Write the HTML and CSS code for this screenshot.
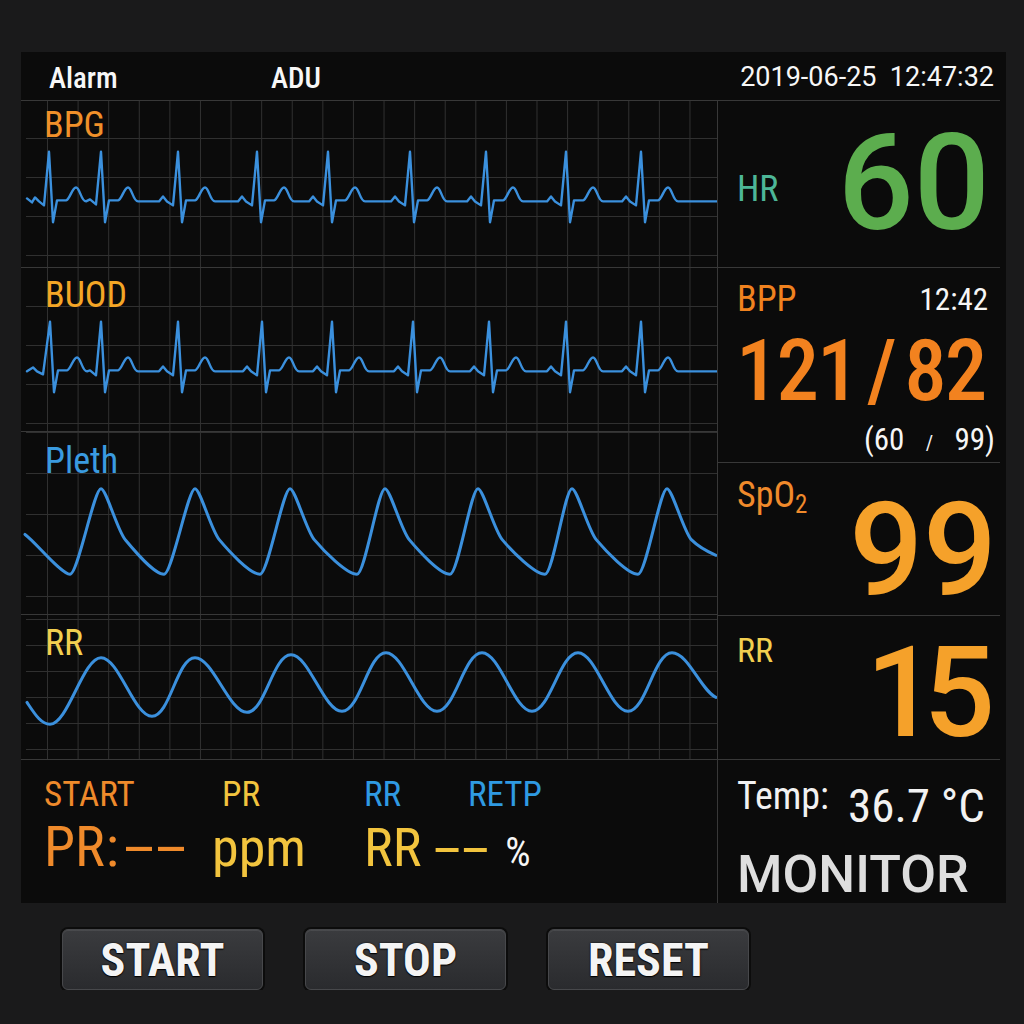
FILE: index.html
```html
<!DOCTYPE html>
<html lang="en">
<head>
<meta charset="utf-8">
<title>Patient Monitor</title>
<link rel="stylesheet" href="styles.css">
</head>
<body>
<main class="screen">
  <header class="topbar">
    <span class="tb-alarm">Alarm</span>
    <span class="tb-adu">ADU</span>
    <span class="tb-date">2019-06-25&nbsp;&nbsp;12:47:32</span>
  </header>
  <div class="main">
    <div class="waves">
      <section class="wave ecg1">
        <div class="wave-label lbl-bpg">BPG</div>
        <svg class="trace" viewBox="0 0 696 167" preserveAspectRatio="none" aria-hidden="true">
          <path class="ecg" d="M6,98 L11,102 L14,97 L18,101 L23,105 L28,51 L32,122 L36,100 L45,100 C49,99 51,87 55,87 C59,87 60,101 65,101 L69,99 L75,104 L80,51 L84,122 L88,100 L97,100 C101,99 103,87 107,87 C111,87 112,101 117,101 L138,101 L142,96 L146,101 L152,105 L157,51 L161,122 L165,100 L174,100 C178,99 180,87 184,87 C188,87 189,101 194,101 L217,101 L221,96 L225,101 L231,105 L236,51 L240,122 L244,100 L253,100 C257,99 259,87 263,87 C267,87 268,101 273,101 L288,101 L292,96 L296,101 L302,105 L307,51 L311,122 L315,100 L324,100 C328,99 330,87 334,87 C338,87 339,101 344,101 L370,101 L374,96 L378,101 L384,105 L389,51 L393,122 L397,100 L406,100 C410,99 412,87 416,87 C420,87 421,101 426,101 L446,101 L450,96 L454,101 L460,105 L465,51 L469,122 L473,100 L482,100 C486,99 488,87 492,87 C496,87 497,101 502,101 L526,101 L530,96 L534,101 L540,105 L545,51 L549,122 L553,100 L562,100 C566,99 568,87 572,87 C576,87 577,101 582,101 L601,101 L605,96 L609,101 L615,105 L620,51 L624,122 L628,100 L637,100 C641,99 643,87 647,87 C651,87 652,101 657,101 L696,101"/>
        </svg>
      </section>
      <section class="wave ecg2">
        <div class="wave-label lbl-buod">BUOD</div>
        <svg class="trace" viewBox="0 0 696 164" preserveAspectRatio="none" aria-hidden="true">
          <path class="ecg" transform="translate(0 3)" d="M6,101 L12,97 L16,101 L22,104 L29,51 L33,122 L37,100 L46,100 C50,99 52,87 56,87 C60,87 61,101 66,101 L69,100 L75,105 L80,51 L84,122 L88,100 L97,100 C101,99 103,87 107,87 C111,87 112,101 117,101 L138,101 L142,96 L146,101 L152,105 L157,51 L161,122 L165,100 L174,100 C178,99 180,87 184,87 C188,87 189,101 194,101 L222,101 L226,96 L230,101 L236,105 L241,51 L245,122 L249,100 L258,100 C262,99 264,87 268,87 C272,87 273,101 278,101 L292,101 L296,96 L300,101 L306,105 L311,51 L315,122 L319,100 L328,100 C332,99 334,87 338,87 C342,87 343,101 348,101 L373,101 L377,96 L381,101 L387,105 L392,51 L396,122 L400,100 L409,100 C413,99 415,87 419,87 C423,87 424,101 429,101 L449,101 L453,96 L457,101 L463,105 L468,51 L472,122 L476,100 L485,100 C489,99 491,87 495,87 C499,87 500,101 505,101 L526,101 L530,96 L534,101 L540,105 L545,51 L549,122 L553,100 L562,100 C566,99 568,87 572,87 C576,87 577,101 582,101 L601,101 L605,96 L609,101 L615,105 L620,51 L624,122 L628,100 L637,100 C641,99 643,87 647,87 C651,87 652,101 657,101 L696,101"/>
        </svg>
      </section>
      <section class="wave pleth">
        <div class="wave-label lbl-pleth">Pleth</div>
        <svg class="trace" viewBox="0 0 696 183" preserveAspectRatio="none" aria-hidden="true">
          <path class="smooth" d="M4,103 C14,110 40,143 49,143 C57,143 73,57 80,57 C85,57 96,98 104,108 C114,120 133,143 143,143 C151,143 167,57 174,57 C179,57 190,98 198,108 C208,120 229,143 239,143 C247,143 262,57 269,57 C274,57 285,98 293,108 C303,120 326,143 336,143 C344,143 357,57 364,57 C369,57 380,98 388,108 C398,120 419,143 429,143 C437,143 450,57 457,57 C462,57 473,98 481,108 C491,120 514,143 524,143 C532,143 544,57 551,57 C556,57 567,98 575,108 C585,120 607,143 617,143 C625,143 639,57 646,57 C651,57 662,98 670,108 C678,116 688,121 695,124"/>
        </svg>
      </section>
      <section class="wave resp">
        <div class="wave-label lbl-rr">RR</div>
        <svg class="trace" viewBox="0 0 696 145" preserveAspectRatio="none" aria-hidden="true">
          <path class="smooth" d="M6,88 C14,100 20,110 29,110 C47,110 62,43 80,43 C98,43 113,102 131,102 C149,102 156,43 174,43 C192,43 208,98 226,98 C244,98 252,40 270,40 C288,40 303,97 321,97 C339,97 347,38 365,38 C383,38 398,97 416,97 C434,97 443,38 461,38 C479,38 493,97 511,97 C529,97 539,38 557,38 C575,38 589,97 607,97 C625,97 633,38 651,38 C667,38 680,76 695,83"/>
        </svg>
      </section>
      <section class="params">
        <div class="params-labels">
          <span class="c-orange">START</span>
          <span class="c-yellow">PR</span>
          <span class="c-blue">RR</span>
          <span class="c-blue">RETP</span>
        </div>
        <div class="params-values">
          <span class="pv pv-pr c-orange">PR<span class="colon">:</span><span class="dash">--</span></span>
          <span class="pv pv-ppm c-yellow">ppm</span>
          <span class="pv pv-rr"><span class="c-yellow">RR</span><span class="dash dash-rr c-yellow">--</span><span class="pct">%</span></span>
        </div>
      </section>
    </div>
    <div class="panels">
      <section class="panel hr">
        <span class="hr-label">HR</span>
        <span class="hr-value">60</span>
      </section>
      <section class="panel bpp">
        <div class="bpp-head">
          <span class="bpp-label">BPP</span>
          <span class="bpp-time">12:42</span>
        </div>
        <div class="bpp-value">121 / 82</div>
        <div class="bpp-range">(60&nbsp;&nbsp; <span class="thin-slash">/</span> &nbsp;&nbsp;99)</div>
      </section>
      <section class="panel spo2">
        <span class="spo2-label">SpO<sub>2</sub></span>
        <span class="spo2-value">99</span>
      </section>
      <section class="panel rrp">
        <span class="rrp-label">RR</span>
        <span class="rrp-value">15</span>
      </section>
      <section class="panel temp">
        <div class="temp-row">
          <span class="temp-label">Temp:</span>
          <span class="temp-value">36.7 °C</span>
        </div>
        <div class="monitor">MONITOR</div>
      </section>
    </div>
  </div>
</main>
<div class="buttons">
  <button class="btn" type="button">START</button>
  <button class="btn" type="button">STOP</button>
  <button class="btn" type="button">RESET</button>
</div>
</body>
</html>
```

FILE: styles.css
```css
* { box-sizing: border-box; }

body {
  margin: 0;
  background: #1a1a1b;
  color: #f4f4f4;
  font-family: "Roboto Condensed", "Liberation Sans Narrow", Roboto, "DejaVu Sans", sans-serif;
  font-stretch: condensed;
}

.screen {
  display: flex;
  flex-direction: column;
  width: 985px;
  height: 851px;
  margin: 52px 0 0 21px;
  background: #0b0b0b;
}

/* ---------- top bar ---------- */
.topbar {
  display: flex;
  align-items: flex-start;
  height: 49px;
  margin-right: 6px;
  padding: 12px 6px 0 28px;
  border-bottom: 1px solid #383838;
  font-size: 29px;
  line-height: 1;
  font-weight: 500;
  color: #f7f7f7;
}
.tb-alarm { width: 222px; }
.tb-date {
  margin: 0 0 0 auto;
  font-family: Roboto, "DejaVu Sans", sans-serif;
  font-stretch: normal;
  font-size: 27px;
  font-weight: 400;
}

.main { display: flex; flex: 1; min-height: 0; }

/* ---------- waveform column ---------- */
.waves {
  display: flex;
  flex-direction: column;
  width: 697px;
  border-right: 1px solid #383838;
}

.wave {
  position: relative;
  border-bottom: 1px solid #383838;
  background-image:
    linear-gradient(to right, #303030 1px, transparent 1px),
    linear-gradient(to bottom, #303030 1px, transparent 1px);
  background-repeat: repeat-x, repeat-y;
  background-size: 30.6px 100%, calc(100% - 5px) var(--hs);
  background-position: 26px 0, 5px var(--ho);
}
.ecg1  { height: 167px; --hs: 39px; --ho: 37px; }
.ecg2  { height: 164px; --hs: 39px; --ho: 38px; }
.pleth { height: 183px; --hs: 41px; --ho: 41px; }
.resp  { height: 145px; --hs: 26px; --ho: 30px; }

.trace {
  position: absolute;
  inset: 0;
  width: 100%;
  height: 100%;
}
.trace path {
  fill: none;
  stroke: #3b90dd;
  stroke-linejoin: round;
  stroke-linecap: round;
}
.trace .ecg { stroke-width: 2.4; }
.trace .smooth { stroke-width: 3; }

.wave-label {
  position: relative;
  z-index: 1;
  padding: 6px 0 0 23px;
  font-size: 36px;
  line-height: 1;
}
.lbl-bpg   { color: #f0902a; }
.lbl-buod  { color: #f4a626; padding-top: 9px; padding-left: 24px; }
.lbl-pleth { color: #3a9be0; padding-top: 11px; padding-left: 24px; }
.lbl-rr    { color: #f2cf50; padding-top: 10px; padding-left: 24px; }

/* ---------- bottom parameter strip ---------- */
.params {
  height: 143px;
  padding: 17px 0 0 23px;
}
.params-labels {
  display: grid;
  grid-template-columns: 178px 142px 104px auto;
  font-size: 35px;
  line-height: 1;
}
.params-values {
  display: grid;
  grid-template-columns: 168px 152px auto;
  align-items: baseline;
  margin-top: 7px;
  line-height: 1;
}
.pv-pr  { font-size: 56px; }
.pv-ppm { font-size: 54px; }
.pv-rr  { font-size: 54px; }
.colon { margin-left: 1px; }
.dash {
  display: inline-block;
  margin-left: 4px;
  transform: scaleX(2.3);
  transform-origin: left center;
}
.dash-rr { margin: 0 45px 0 12px; transform: scaleX(2.1); }
.pct { font-size: 40px; color: #f6f6f6; }

.c-orange { color: #ef8a2b; }
.c-yellow { color: #f2c43e; }
.c-blue   { color: #2f9ae2; }

/* ---------- numeric panels ---------- */
.panels {
  display: flex;
  flex-direction: column;
  flex: 1;
  padding-right: 6px;
}
.panel { border-bottom: 1px solid #383838; }

.hr {
  display: flex;
  align-items: center;
  justify-content: space-between;
  height: 167px;
  padding: 0 10px 0 19px;
}
.hr-label { margin-top: 9px; font-size: 36px; line-height: 1; color: #4db697; }
.hr-value {
  font-family: Roboto, "DejaVu Sans", sans-serif;
  font-stretch: normal;
  font-weight: 500;
  font-size: 134px;
  line-height: 1;
  color: #5cad4e;
}

.bpp {
  display: flex;
  flex-direction: column;
  height: 195px;
  padding: 13px 0 0 19px;
}
.bpp-head {
  display: flex;
  justify-content: space-between;
  align-items: flex-start;
  padding-right: 12px;
}
.bpp-label { font-size: 36px; line-height: 1; color: #f0821f; }
.bpp-time { margin-top: 3px; font-size: 31px; line-height: 1; color: #f6f6f6; }
.bpp-value {
  margin: 20px 0 0 -1px;
  font-size: 85px;
  font-weight: 500;
  line-height: 0.8;
  letter-spacing: -2px;
  word-spacing: -8px;
  white-space: nowrap;
  color: #f2821f;
}
.bpp-range {
  align-self: flex-end;
  margin: 19px 5px 0 0;
  font-size: 31px;
  line-height: 1;
  color: #f6f6f6;
  white-space: nowrap;
}
.thin-slash { font-size: 20px; }

.spo2 {
  display: flex;
  justify-content: space-between;
  height: 153px;
  padding: 0 3px 0 19px;
}
.spo2-label {
  align-self: flex-start;
  margin-top: 14px;
  font-size: 36px;
  line-height: 1;
  color: #f08a2b;
}
.spo2-label sub {
  font-size: 25px;
  line-height: 0;
  vertical-align: -6px;
}
.spo2-value, .rrp-value {
  align-self: flex-end;
  font-family: Roboto, "DejaVu Sans", sans-serif;
  font-stretch: normal;
  font-weight: 500;
  line-height: 1;
  color: #f5a12a;
}
.spo2-value { font-size: 130px; }

.rrp {
  display: flex;
  justify-content: space-between;
  height: 144px;
  padding: 0 19px 0 19px;
}
.rrp-label {
  align-self: flex-start;
  margin-top: 17px;
  font-size: 34px;
  line-height: 1;
  color: #f2cf50;
}
.rrp-value { font-size: 126px; margin-bottom: 3px; letter-spacing: -14px; }

.temp {
  height: 143px;
  padding: 17px 0 0 19px;
  border-bottom: none;
}
.temp-row { display: flex; align-items: flex-start; }
.temp-label { font-size: 38px; line-height: 1; color: #f2f2f2; }
.temp-value { margin: 5px 0 0 19px; font-size: 47px; line-height: 1; color: #f2f2f2; }
.monitor {
  margin-top: 20px;
  font-family: Roboto, "DejaVu Sans", sans-serif;
  font-stretch: normal;
  font-weight: 500;
  font-size: 52px;
  line-height: 1;
  color: #dedede;
}

/* ---------- hardware buttons ---------- */
.buttons {
  display: flex;
  gap: 42px;
  margin: 26px 0 0 62px;
}
.btn {
  display: flex;
  align-items: center;
  justify-content: center;
  width: 201px;
  height: 61px;
  padding: 0;
  border: 1px solid #47484b;
  border-radius: 6px;
  background: linear-gradient(#3a3b3e, #2a2b2e);
  box-shadow: 0 0 0 2px #0c0c0c, inset 0 1px 0 rgba(255, 255, 255, 0.08);
  color: #f4f4f4;
  font-family: "Roboto Condensed", "Liberation Sans Narrow", Roboto, sans-serif;
  font-stretch: condensed;
  font-weight: 700;
  font-size: 46px;
  line-height: 1;
  text-shadow: 0 0 2px #000, 0 1px 1px #000;
}
```
